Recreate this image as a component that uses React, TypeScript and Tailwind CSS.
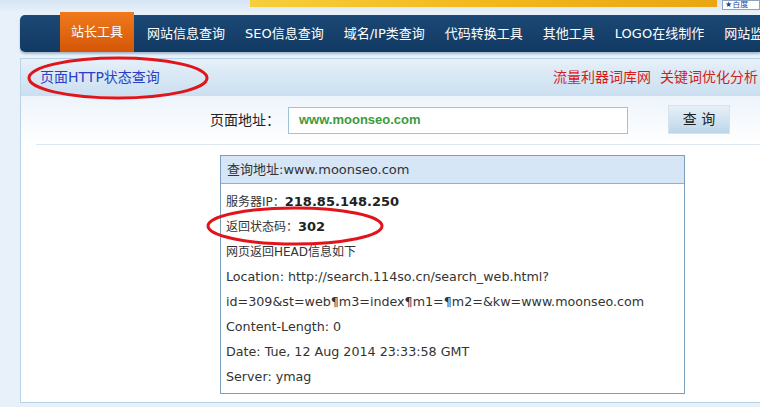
import React from 'react';

const navItems = ['网站信息查询', 'SEO信息查询', '域名/IP类查询', '代码转换工具', '其他工具', 'LOGO在线制作', '网站监控'];

const rows: { label: string; value?: string; latin?: boolean }[] = [
    { label: '服务器IP：', value: '218.85.148.250' },
    { label: '返回状态码：', value: '302' },
    { label: '网页返回HEAD信息如下' },
    { label: 'Location: http://search.114so.cn/search_web.html?', latin: true },
    { label: 'id=309&st=web¶m3=index¶m1=¶m2=&kw=www.moonseo.com', latin: true },
    { label: 'Content-Length: 0', latin: true },
    { label: 'Date: Tue, 12 Aug 2014 23:33:58 GMT', latin: true },
    { label: 'Server: ymag', latin: true },
];

const font = "font-['DejaVu_Sans','Noto_Sans_CJK_SC',sans-serif]";

const App: React.FC = () => {
    return (
        <div className={`relative w-[760px] h-[407px] overflow-hidden bg-[#e8f0f9] ${font}`}>
            {/* top strip with banner */}
            <div className="flex h-[12px] bg-gradient-to-b from-[#d6e5f3] to-[#e8f0f9]">
                <div className="ml-[250px] w-[467px] h-[7px] bg-gradient-to-r from-[#f6cf3a] via-[#f3b81c] to-[#e9a612]" />
                <div className="ml-[5px] w-[38px] h-[10px] overflow-hidden border border-[#8aa4c0] bg-white text-[8px] leading-[8px] text-[#1d3fa8] pl-[2px] whitespace-nowrap">
                    ★百度
                </div>
            </div>

            {/* nav */}
            <div className="ml-[20px] mt-[3px] h-[37px] flex rounded-l-[5px] bg-gradient-to-b from-[#1c4875] to-[#113a63] shadow-[0_2px_2px_rgba(120,150,180,0.6)]">
                <div className="ml-[40px] -mt-[3px] h-[40px] w-[74px] shrink-0 flex items-center justify-center whitespace-nowrap bg-gradient-to-b from-[#f07a1c] to-[#d45606] text-white text-[13px]">
                    站长工具
                </div>
                <div className="ml-[13px] flex items-center gap-[20px] whitespace-nowrap text-[13px] text-white">
                    {navItems.map((item) => (
                        <span key={item} className="shrink-0">{item}</span>
                    ))}
                </div>
            </div>

            {/* main panel */}
            <div className="ml-[20px] mt-[6px] h-[345px] border border-[#b8d3e6] border-r-0 bg-white flex flex-col">
                <div className="h-[37px] flex items-center justify-between bg-gradient-to-b from-[#e6f0f9] to-[#cadff0] pl-[19px] pr-[2px]">
                    <span className="text-[14px] text-[#2a3fc4]">页面HTTP状态查询</span>
                    <div className="flex gap-[9px] text-[14px] text-[#d41c1c] whitespace-nowrap">
                        <span>流量利器词库网</span>
                        <span>关键词优化分析</span>
                    </div>
                </div>

                <div className="h-[48px] flex items-center bg-gradient-to-b from-[#edf4fb] to-white">
                    <span className="ml-[189px] w-[78px] text-[14px] text-[#222]">页面地址：</span>
                    <div className="w-[340px] h-[27px] border border-[#9fc4da] bg-white flex items-center pl-[10px] font-['Liberation_Sans',sans-serif] text-[13px] font-bold text-[#3c9a3c]">
                        www.moonseo.com
                    </div>
                    <div className="ml-[40px] w-[62px] h-[29px] -mt-[2px] flex items-center justify-center bg-gradient-to-b from-[#e6f0f8] to-[#bed6e9] border border-[#d3e3ef] text-[14px] text-[#222]">
                        查 询
                    </div>
                </div>

                <div className="ml-[15px] h-px bg-[#dce8f1]" />

                <div className="ml-[199px] mt-[10px] w-[465px] border border-[#7b9dbe] bg-white">
                    <div className="h-[28px] flex items-center pl-[6px] bg-[#d6e6f7] border-b border-[#8eb0d1] text-[13px] text-[#333]">
                        查询地址:www.moonseo.com
                    </div>
                    <div className="pt-[5px] pb-[4px] pl-[5px]">
                        {rows.map((r, i) => (
                            <div
                                key={i}
                                className={`h-[25px] flex items-center whitespace-nowrap text-[#333] ${r.latin ? 'text-[12.7px]' : 'text-[12px]'}`}
                            >
                                <span>{r.label}</span>
                                {r.value && <span className="font-bold text-[13px] text-[#222]">{r.value}</span>}
                            </div>
                        ))}
                    </div>
                </div>
            </div>

            {/* red marker ellipses */}
            <svg className="absolute left-0 top-0 pointer-events-none" width="760" height="407">
                <ellipse cx="118" cy="78" rx="89" ry="20" fill="none" stroke="#e0141a" strokeWidth="3" />
                <ellipse cx="295" cy="226" rx="87" ry="18" fill="none" stroke="#e0141a" strokeWidth="3" />
            </svg>
        </div>
    );
};

export default App;
